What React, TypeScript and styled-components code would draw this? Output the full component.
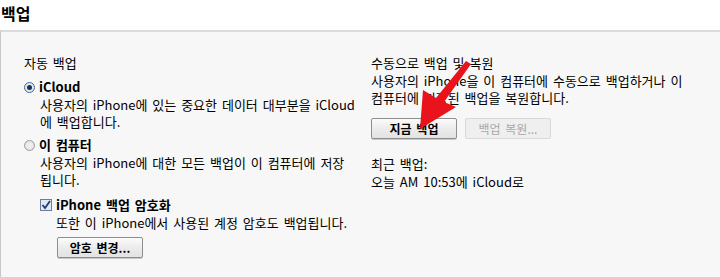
import styled, { createGlobalStyle } from "styled-components";

const Global = createGlobalStyle`
  html, body {
    margin: 0;
    padding: 0;
    background: #ffffff;
  }
  body {
    font-family: "Noto Sans CJK KR", "Liberation Sans", sans-serif;
    font-size: 13px;
    word-spacing: 2px;
    color: #000;
  }
`;

const Page = styled.div`
  width: 720px;
  height: 277px;
  overflow: hidden;
  display: flex;
  flex-direction: column;
`;

const Title = styled.h1`
  margin: 0;
  height: 30px;
  padding: 2px 0 0 1px;
  box-sizing: border-box;
  font-size: 16px;
  font-weight: 700;
  line-height: 22px;
`;

const Panel = styled.div`
  position: relative;
  flex: 1;
  background: #f7f7f7;
  border-top: 2px solid #dcdcdc;
  border-left: 1px solid #c8c8c8;
  display: grid;
  grid-template-columns: 347px 1fr;
  padding: 22px 0 0 23px;
`;

const Column = styled.div`
  display: flex;
  flex-direction: column;
`;

const Heading = styled.div`
  line-height: 18px;
  margin-bottom: 6px;
`;

const Option = styled.div<{ $indent?: number; $gap?: number }>`
  display: flex;
  align-items: center;
  gap: 4px;
  padding-left: ${(p) => p.$indent ?? 0}px;
  margin-top: ${(p) => p.$gap ?? 0}px;
  font-weight: 700;
  line-height: 18px;
`;

const Desc = styled.div<{ $indent: number; $after?: number }>`
  padding-left: ${(p) => p.$indent}px;
  line-height: 17px;
  margin-bottom: ${(p) => p.$after ?? 6}px;
`;

const Radio = styled.span<{ $on?: boolean }>`
  width: 11px;
  height: 11px;
  border-radius: 50%;
  box-sizing: border-box;
  border: 1px solid ${(p) => (p.$on ? "#3d6aa8" : "#9a9a9a")};
  background: radial-gradient(circle, #f4f4f4 0%, #dcdcdc 100%);
  display: flex;
  align-items: center;
  justify-content: center;
  &::after {
    content: "";
    display: ${(p) => (p.$on ? "block" : "none")};
    width: 5px;
    height: 5px;
    border-radius: 50%;
    background: #1d2f4f;
  }
`;

const Check = styled.span`
  width: 12px;
  height: 12px;
  box-sizing: border-box;
  border: 1px solid #6b7d99;
  background: #dfe8f5;
  display: flex;
  align-items: center;
  justify-content: center;
`;

const Button = styled.button<{ $disabled?: boolean }>`
  height: 21px;
  width: 86px;
  padding: 0;
  font-family: inherit;
  font-size: 12px;
  word-spacing: 2px;
  font-weight: ${(p) => (p.$disabled ? 400 : 700)};
  color: ${(p) => (p.$disabled ? "#a8a8a8" : "#000")};
  border: 1px solid ${(p) => (p.$disabled ? "#d8d8d8" : "#8e8e8e")};
  border-radius: 2px;
  background: ${(p) =>
    p.$disabled ? "#efefef" : "linear-gradient(#fbfbfb, #ececec 50%, #e2e2e2)"};
  box-shadow: ${(p) => (p.$disabled ? "none" : "0 1px 0 #c8c8c8")};
  line-height: 19px;
`;

const ButtonRow = styled.div<{ $indent: number }>`
  display: flex;
  gap: 8px;
  padding-left: ${(p) => p.$indent}px;
`;

const Text = styled.div<{ $gap?: number }>`
  line-height: 18px;
  margin-top: ${(p) => p.$gap ?? 0}px;
`;

const Arrow = styled.svg`
  position: absolute;
  left: 0;
  top: 0;
  pointer-events: none;
`;

export default function App() {
  return (
    <Page>
      <Global />
      <Title>백업</Title>
      <Panel>
        <Column>
          <Heading>자동 백업</Heading>
          <Option>
            <Radio $on />
            iCloud
          </Option>
          <Desc $indent={16}>
            사용자의 iPhone에 있는 중요한 데이터 대부분을 iCloud
            <br />에 백업합니다.
          </Desc>
          <Option>
            <Radio />
            이 컴퓨터
          </Option>
          <Desc $indent={16}>
            사용자의 iPhone에 대한 모든 백업이 이 컴퓨터에 저장
            <br />됩니다.
          </Desc>
          <Option $indent={16} $gap={2}>
            <Check>
              <svg width="10" height="10" viewBox="0 0 10 10">
                <path d="M1.5 5 L4 8 L9 1" fill="none" stroke="#1f3a6e" strokeWidth="1.8" />
              </svg>
            </Check>
            iPhone 백업 암호화
          </Option>
          <Desc $indent={32}>또한 이 iPhone에서 사용된 계정 암호도 백업됩니다.</Desc>
          <ButtonRow $indent={33}>
            <Button>암호 변경...</Button>
          </ButtonRow>
        </Column>
        <Column>
          <Heading style={{ marginBottom: 0 }}>수동으로 백업 및 복원</Heading>
          <Desc $indent={0} $after={12}>
            사용자의 iPhone을 이 컴퓨터에 수동으로 백업하거나 이
            <br />
            컴퓨터에 저장된 백업을 복원합니다.
          </Desc>
          <ButtonRow $indent={0}>
            <Button>지금 백업</Button>
            <Button $disabled>백업 복원...</Button>
          </ButtonRow>
          <Text $gap={16}>최근 백업:</Text>
          <Text>오늘 AM 10:53에 iCloud로</Text>
        </Column>
        <Arrow width="720" height="246" viewBox="0 31 720 246">
          <path d="M465 60 L470 63 L443 101 L455 106 L419 128 L422 89 L435 97 Z" fill="#e8131b" />
        </Arrow>
      </Panel>
    </Page>
  );
}
